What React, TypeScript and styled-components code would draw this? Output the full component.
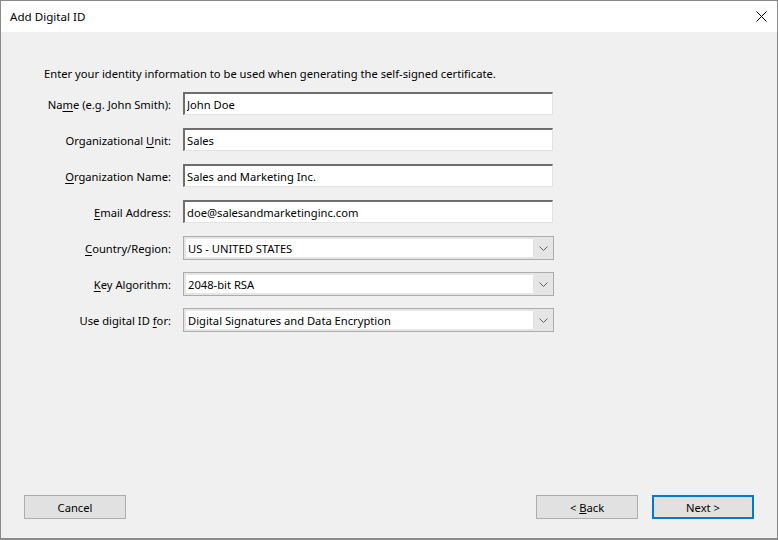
import React from "react"
import styled, { createGlobalStyle } from "styled-components"

const GlobalStyle = createGlobalStyle`
    html, body {
        margin: 0;
        padding: 0;
        background: #ffffff;
    }
    * {
        box-sizing: border-box;
    }
`

const Window = styled.div`
    display: flex;
    flex-direction: column;
    width: 778px;
    height: 540px;
    border: 1px solid #8a8a8a;
    border-bottom-width: 2px;
    background: #f0f0f0;
    font-family: "Noto Sans", "Open Sans", sans-serif;
    font-size: 11.2px;
    color: #000;
`

const TitleBar = styled.div`
    display: flex;
    align-items: center;
    justify-content: space-between;
    height: 31px;
    padding: 0 0 0 9px;
    background: #ffffff;
`

const TitleText = styled.span`
    font-size: 11.6px;
`

const CloseButton = styled.div`
    display: flex;
    align-items: center;
    justify-content: center;
    width: 32px;
    height: 31px;
`

const Body = styled.div`
    flex: 1;
    display: flex;
    flex-direction: column;
    padding: 34px 23px 19px 43px;
`

const Intro = styled.p`
    margin: 0 0 10px 0;
    line-height: 16px;
`

const Form = styled.div`
    display: grid;
    grid-template-columns: 127px 371px;
    grid-auto-rows: 24px;
    column-gap: 12px;
    row-gap: 12px;
    align-items: center;
`

const Label = styled.label`
    text-align: right;
    white-space: nowrap;
    u {
        text-decoration: underline;
        text-underline-offset: 2px;
    }
`

const TextField = styled.input`
    width: 370px;
    height: 23px;
    align-self: start;
    padding: 0 2px;
    border: 1px solid #e3e3e3;
    border-top: 2px solid #6e6e6e;
    border-left: 2px solid #6e6e6e;
    background: #ffffff;
    font: inherit;
    color: #000;
    outline: none;
`

const SelectBox = styled.div`
    display: flex;
    align-items: stretch;
    width: 371px;
    height: 24px;
    border: 1px solid #adadad;
    background: #e5e5e5;
    padding: 2px 0 2px 2px;
`

const SelectValue = styled.div`
    flex: 1;
    display: flex;
    align-items: center;
    padding-left: 2px;
    background: #ffffff;
`

const SelectArrow = styled.div`
    width: 20px;
    display: flex;
    align-items: center;
    justify-content: center;
`

const Footer = styled.div`
    margin-top: auto;
    margin-left: -20px;
    display: flex;
    align-items: center;
    gap: 14px;
`

const Button = styled.button<{ $primary?: boolean }>`
    width: 102px;
    height: 24px;
    padding: 0;
    background: #e1e1e1;
    border: ${p => (p.$primary ? "2px solid #0078d7" : "1px solid #adadad")};
    font: inherit;
    color: #000;
    &:first-child {
        margin-right: auto;
    }
`

function Chevron() {
    return (
        <svg width="9" height="5" viewBox="0 0 9 5">
            <path d="M0.5 0.5 L4.5 4.5 L8.5 0.5" fill="none" stroke="#606060" strokeWidth="1" />
        </svg>
    )
}

function CloseIcon() {
    return (
        <svg width="11" height="11" viewBox="0 0 11 11">
            <path d="M0.5 0.5 L10.5 10.5 M10.5 0.5 L0.5 10.5" stroke="#000" strokeWidth="1" />
        </svg>
    )
}

const fields = [
    { label: <>Na<u>m</u>e (e.g. John Smith):</>, value: "John Doe" },
    { label: <>Organizational <u>U</u>nit:</>, value: "Sales" },
    { label: <><u>O</u>rganization Name:</>, value: "Sales and Marketing Inc." },
    { label: <><u>E</u>mail Address:</>, value: "doe@salesandmarketinginc.com" },
]

const selects = [
    { label: <><u>C</u>ountry/Region:</>, value: "US - UNITED STATES" },
    { label: <><u>K</u>ey Algorithm:</>, value: "2048-bit RSA" },
    { label: <>Use digital ID <u>f</u>or:</>, value: "Digital Signatures and Data Encryption" },
]

export default function App() {
    return (
        <>
            <GlobalStyle />
            <Window>
                <TitleBar>
                    <TitleText>Add Digital ID</TitleText>
                    <CloseButton>
                        <CloseIcon />
                    </CloseButton>
                </TitleBar>
                <Body>
                    <Intro>Enter your identity information to be used when generating the self-signed certificate.</Intro>
                    <Form>
                        {fields.map((f, i) => (
                            <React.Fragment key={i}>
                                <Label>{f.label}</Label>
                                <TextField defaultValue={f.value} />
                            </React.Fragment>
                        ))}
                        {selects.map((s, i) => (
                            <React.Fragment key={i}>
                                <Label>{s.label}</Label>
                                <SelectBox>
                                    <SelectValue>{s.value}</SelectValue>
                                    <SelectArrow>
                                        <Chevron />
                                    </SelectArrow>
                                </SelectBox>
                            </React.Fragment>
                        ))}
                    </Form>
                    <Footer>
                        <Button>Cancel</Button>
                        <Button>&lt; <u>B</u>ack</Button>
                        <Button $primary>Next &gt;</Button>
                    </Footer>
                </Body>
            </Window>
        </>
    )
}
